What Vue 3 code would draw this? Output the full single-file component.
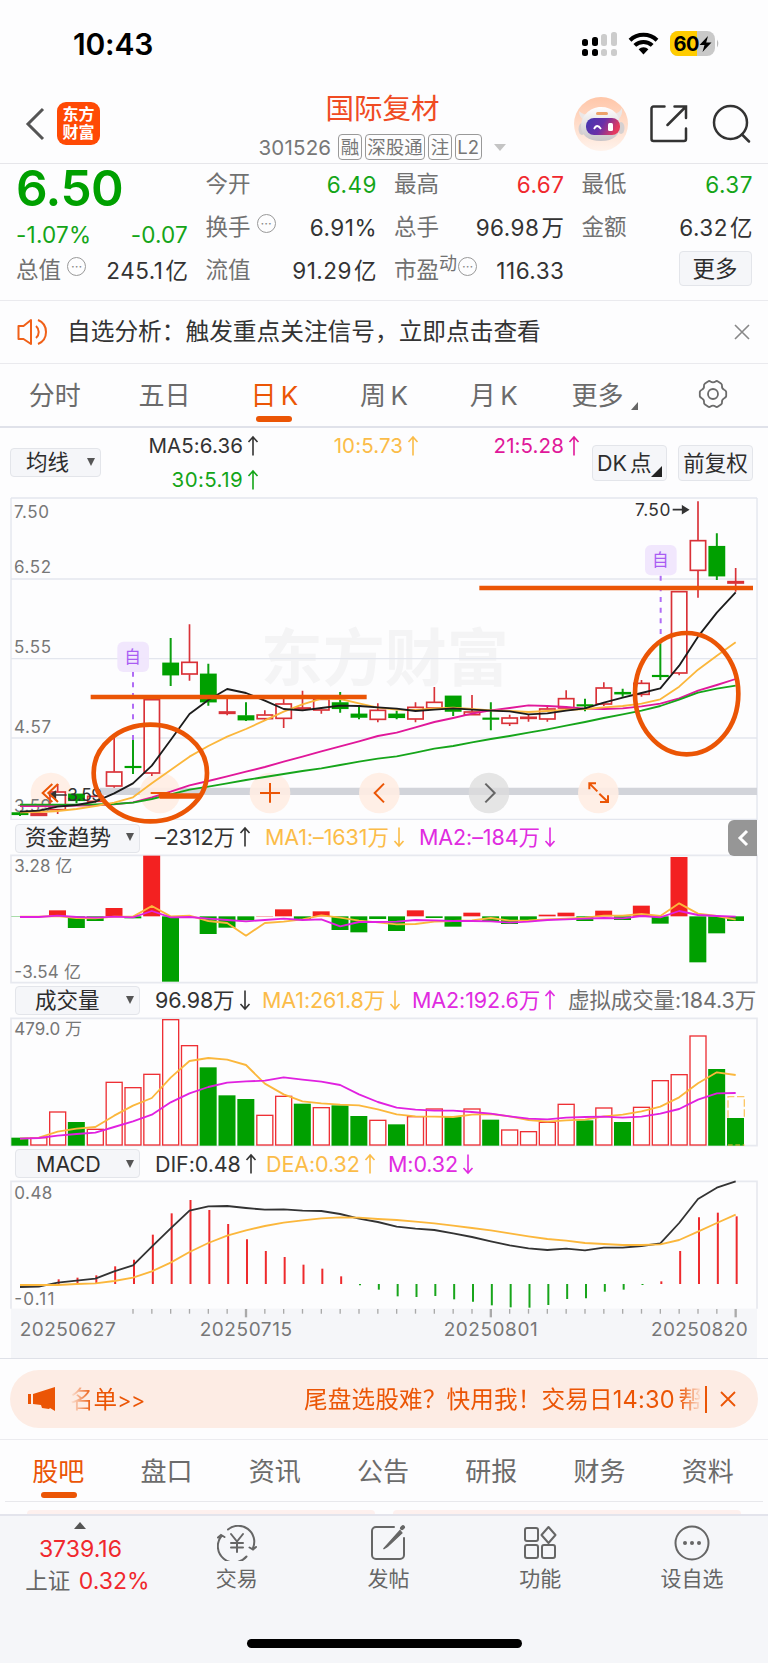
<script setup>
import { ref, computed } from 'vue'

// ---------- quote ----------
const tags = ['融', '深股通', '注', 'L2']

const periods = ['分时', '五日', '日 K', '周 K', '月 K', '更多']
const period = ref(2)

const infoTabs = ['股吧', '盘口', '资讯', '公告', '研报', '财务', '资料']
const infoTab = ref(0)

// ---------- charts (3 units = 1px) ----------
const cx = (i) => 60 + i * 56.5
const line = (values) => values.map((v, i) => `${cx(i)},${v}`).join(' ')

// [up, high, top, bottom, low]
const candles = [
  [0, 966, 968, 974, 978], [1, 970, 970, 977, 977], [1, 882, 905, 960, 972], [0, 912, 912, 932, 940],
  [1, 914, 918, 935, 938], [1, 740, 845, 889, 893], [0, 750, 829, 833, 852], [1, 628, 628, 850, 858],
  [0, 444, 519, 555, 588], [1, 403, 516, 553, 572], [0, 521, 552, 636, 647], [1, 625, 665, 671, 676],
  [0, 637, 677, 690, 693], [1, 661, 674, 687, 693], [1, 625, 641, 686, 714], [1, 602, 653, 658, 662],
  [1, 618, 627, 661, 671], [0, 606, 638, 656, 668], [0, 648, 672, 682, 688], [1, 640, 660, 689, 697],
  [0, 662, 672, 683, 688], [1, 637, 651, 688, 697], [1, 591, 636, 655, 655], [0, 618, 618, 664, 678],
  [1, 615, 665, 675, 675], [0, 637, 684, 688, 721], [1, 674, 683, 701, 708], [1, 672, 681, 686, 695],
  [1, 646, 656, 688, 695], [1, 601, 625, 655, 655], [0, 626, 644, 648, 664], [1, 577, 593, 643, 648],
  [0, 596, 607, 612, 620], [1, 570, 579, 614, 620], [0, 460, 556, 560, 570], [1, 304, 304, 550, 556],
  [1, 34, 151, 242, 323], [0, 130, 169, 258, 270], [1, 234, 274, 280, 305]
]

const ma5 = [965, 962, 950, 945, 935, 910, 880, 827, 750, 672, 630, 597, 609, 632, 657, 661, 654, 647, 648, 652, 656, 663, 659, 655, 659, 662, 664, 673, 670, 662, 655, 638, 623, 609, 595, 527, 440, 368, 307]
const ma10 = [967, 966, 963, 957, 948, 938, 922, 880, 840, 800, 768, 740, 717, 691, 665, 643, 626, 627, 640, 653, 659, 660, 655, 653, 657, 661, 663, 666, 663, 660, 657, 652, 648, 641, 628, 590, 539, 497, 457]
const ma21 = [948, 948, 948, 947, 946, 943, 937, 922, 905, 886, 873, 859, 845, 831, 815, 800, 784, 769, 754, 738, 728, 712, 696, 684, 671, 661, 654, 646, 648, 651, 656, 657, 655, 649, 641, 625, 602, 585, 567]
const ma30 = [944, 944, 944, 944, 943, 942, 938, 927, 913, 899, 890, 880, 870, 861, 852, 843, 835, 825, 815, 806, 799, 788, 776, 768, 757, 747, 738, 728, 718, 707, 696, 684, 673, 662, 648, 629, 608, 596, 587]

const priceLabels = [['7.50', 83], ['6.52', 248], ['5.55', 489], ['4.57', 729], ['3.59', 967]]

// main fund flow, positive = inflow
const funds = [-1, 0, 18, -35, -14, 25, -6, 182, -196, 0, -53, -34, -12, 1, 21, -10, 15, -41, -48, -8, -44, 18, -5, -31, 11, -16, -23, -12, 5, 11, -14, 17, -11, 32, -22, 178, -138, -51, -14]
const fundMa1 = [305, 305, 303, 309, 310, 305, 305, 273, 304, 302, 318, 324, 362, 324, 320, 313, 301, 308, 317, 322, 328, 327, 320, 318, 316, 309, 317, 316, 313, 311, 308, 302, 302, 297, 303, 265, 296, 303, 314]
const fundMa2 = [306, 306, 302, 306, 308, 305, 307, 288, 307, 306, 311, 315, 319, 315, 311, 315, 313, 334, 321, 321, 320, 315, 316, 318, 318, 319, 323, 320, 315, 313, 311, 309, 310, 303, 307, 288, 300, 303, 305]

// volume: bar tops, floor at 991
const volumes = [968, 966, 889, 921, 941, 800, 816, 776, 612, 690, 757, 841, 852, 899, 842, 866, 876, 871, 903, 914, 928, 903, 880, 906, 880, 914, 943, 948, 920, 866, 916, 877, 921, 875, 795, 777, 661, 762, 909]
const volumeDown = [0, 3, 10, 11, 12, 15, 17, 18, 20, 23, 25, 30, 32, 37, 38]
const volMa1 = [971, 968, 950, 941, 936, 902, 872, 849, 788, 738, 729, 734, 750, 806, 838, 859, 865, 869, 871, 883, 898, 904, 905, 906, 899, 897, 904, 915, 920, 916, 914, 904, 899, 889, 875, 847, 805, 772, 780]
const volMa2 = [971, 969, 962, 957, 953, 936, 919, 899, 862, 835, 816, 803, 799, 797, 787, 794, 800, 810, 838, 861, 878, 884, 887, 887, 891, 896, 904, 911, 913, 908, 906, 905, 908, 905, 896, 882, 854, 835, 834]

const macd = [406, 406, 388, 383, 376, 349, 329, 254, 190, 150, 180, 222, 268, 303, 321, 344, 356, 379, 406, 419, 439, 441, 438, 448, 455, 466, 472, 473, 465, 447, 445, 425, 419, 405, 394, 303, 202, 188, 199]
const dif = [411, 410, 398, 392, 386, 364, 346, 290, 235, 182, 169, 168, 174, 179, 178, 182, 183, 192, 206, 216, 230, 236, 240, 250, 261, 274, 286, 295, 300, 296, 301, 293, 293, 288, 280, 219, 147, 113, 94]
const dea = [405, 405, 405, 402, 400, 393, 383, 364, 338, 306, 279, 257, 241, 228, 218, 211, 205, 202, 203, 207, 210, 215, 220, 227, 234, 241, 250, 259, 267, 272, 279, 282, 285, 285, 283, 270, 245, 219, 194]

const ticks = computed(() => dif.map((_, i) => i).filter((i) => i >= 6))
const dates = [['20250627', 59, 288], ['20250715', 599, 277], ['20250801', 1331, 282], ['20250820', 1953, 290]]
</script>

<template>
  <div class="page">
    <!-- status bar -->
    <div class="status">
      <span class="time">10:43</span>
      <svg class="status-icons" width="140" height="28" viewBox="0 0 140 28">
        <g fill="#000">
          <rect x="2" y="9" width="6" height="7" rx="2.5" /><rect x="12" y="7" width="6" height="9" rx="2.5" />
          <rect x="2" y="19" width="6" height="7" rx="2.5" /><rect x="12" y="19" width="6" height="7" rx="2.5" />
        </g>
        <g fill="#ccc">
          <rect x="21" y="4" width="6" height="12" rx="2.5" /><rect x="31" y="2" width="6" height="14" rx="2.5" />
          <rect x="21" y="19" width="6" height="7" rx="2.5" /><rect x="31" y="19" width="6" height="7" rx="2.5" />
        </g>
        <g fill="none" stroke="#000" stroke-width="4">
          <path d="M50 10.2a19.5 19.5 0 0 1 27 0" />
          <path d="M54.8 15.4a12.6 12.6 0 0 1 17.4 0" />
        </g>
        <path d="M58.6 19.2a7.2 7.2 0 0 1 9.8 0L63.5 24.6z" fill="#000" />
        <rect x="90" y="1" width="45" height="25" rx="8" fill="#c9c9c9" />
        <path d="M98 1h19v25h-19a8 8 0 0 1-8-8v-9a8 8 0 0 1 8-8z" fill="#fc0" />
        <path d="M137 9.5q2.5 4 0 8z" fill="#bbb" />
        <text x="93.5" y="20.8" class="battery">60</text>
        <path d="M128 6l-8.5 9h5l-2 7 9-9.5h-5.3z" fill="#000" />
      </svg>
    </div>

    <!-- title bar -->
    <header class="head">
      <svg class="back" width="20" height="34" viewBox="0 0 20 34"><path d="M18 2L3 17l15 15" fill="none" stroke="#555" stroke-width="3" /></svg>
      <div class="logo"><span>东方</span><span>财富</span></div>
      <div class="title">
        <div class="name">国际复材</div>
        <div class="code">
          <span class="num">301526</span>
          <span v-for="t in tags" :key="t" class="tag">{{ t }}</span>
          <i class="caret"></i>
        </div>
      </div>
      <svg class="robot" width="56" height="56" viewBox="0 0 56 56">
        <defs>
          <linearGradient id="halo" x1="0" y1="0" x2="0" y2="1"><stop offset="0" stop-color="#ffc6a8" /><stop offset="1" stop-color="#fff3ec" /></linearGradient>
          <linearGradient id="visor" x1="0" y1="0" x2="1" y2=".3"><stop offset="0" stop-color="#4236b0" /><stop offset=".55" stop-color="#6a2fa8" /><stop offset="1" stop-color="#e53a5e" /></linearGradient>
          <linearGradient id="shell" x1="0" y1="0" x2="0" y2="1"><stop offset="0" stop-color="#fff" /><stop offset="1" stop-color="#c9c5c8" /></linearGradient>
        </defs>
        <circle cx="28" cy="28" r="27" fill="url(#halo)" />
        <path d="M6 15q0 6 5 9l5-5q-6 0-10-4zM49 12q1 6-3 11l-7-5q7 0 10-6z" fill="#ece7e6" />
        <ellipse cx="9" cy="33" rx="3.5" ry="6" fill="#d5d0d1" /><ellipse cx="48" cy="32" rx="3.5" ry="6" fill="#d5d0d1" />
        <path d="M28 11c12 0 19 8 19 18s-6 16-19 16S8 39 8 30s8-19 20-19z" fill="url(#shell)" />
        <rect x="23" y="16" width="12" height="3" rx="1.5" fill="#eda26a" />
        <rect x="13" y="22" width="34" height="17" rx="8" fill="url(#visor)" />
        <path d="M21 33q3-6 7 0" fill="none" stroke="#fff" stroke-width="1.8" /><rect x="35" y="27" width="5" height="8" rx="1.5" fill="#fff" />
      </svg>
      <svg class="share" width="38" height="38" viewBox="0 0 38 38" fill="none" stroke="#333" stroke-width="2.5" stroke-linecap="round">
        <path d="M14.500 1.500H3.500a2 2 0 0 0-2 2v30.500a2 2 0 0 0 2 2H34a2 2 0 0 0 2-2V23.500" />
        <path d="M24.500 1.500H36V13M36 1.500L17.500 20" />
      </svg>
      <svg class="search" width="40" height="40" viewBox="0 0 40 40" fill="none" stroke="#333" stroke-width="2.5" stroke-linecap="round">
        <circle cx="18.500" cy="18.500" r="16.500" /><path d="M30 30.500l7 7" />
      </svg>
    </header>

    <!-- quote -->
    <section class="quote">
      <div class="col first">
        <div class="price">6.50</div>
        <div class="row chg green"><span>-1.07%</span><span>-0.07</span></div>
        <div class="row"><label>总值<sup class="dots">···</sup></label><b>245.1<em>亿</em></b></div>
      </div>
      <div class="col">
        <div class="row"><label>今开</label><b class="green">6.49</b></div>
        <div class="row"><label>换手<sup class="dots">···</sup></label><b>6.91%</b></div>
        <div class="row"><label>流值</label><b>91.29<em>亿</em></b></div>
      </div>
      <div class="col">
        <div class="row"><label>最高</label><b class="red">6.67</b></div>
        <div class="row"><label>总手</label><b>96.98<em>万</em></b></div>
        <div class="row"><label>市盈<sup class="dyn">动</sup><sup class="dots near">···</sup></label><b>116.33</b></div>
      </div>
      <div class="col">
        <div class="row"><label>最低</label><b class="green">6.37</b></div>
        <div class="row"><label>金额</label><b>6.32<em>亿</em></b></div>
        <div class="row end"><button class="btn more">更多</button></div>
      </div>
    </section>

    <!-- notice -->
    <div class="notice">
      <svg width="32" height="28" viewBox="0 0 32 28" fill="none" stroke="#f06018" stroke-width="2" stroke-linejoin="round">
        <path d="M1.500 8h5L14 2v24l-7.500-5h-5zM19 8a8 8 0 0 1 0 12M21 2a13 13 0 0 1 0 24" />
      </svg>
      <span>自选分析：触发重点关注信号，立即点击查看</span>
      <svg class="close" width="16" height="16" viewBox="0 0 16 16"><path d="M1 1l14 14M15 1L1 15" stroke="#888" stroke-width="1.600" /></svg>
    </div>

    <!-- period tabs -->
    <nav class="periods">
      <a v-for="(p, i) in periods" :key="p" :class="{ on: period === i }" @click="period = i">{{ p }}<i v-if="i === 5" class="corner"></i></a>
      <a>
        <svg width="30" height="30" viewBox="0 0 30 30" fill="none" stroke="#6b6b6b" stroke-width="1.800" stroke-linejoin="round">
          <path d="M10 2.500q1.200-1 2.500 0 2.500 1.800 5 0 1.300-1 2.500 0l3 2q1.200.8 1 2.500-.3 2.500 2.200 3.800 1.800.8 2 2.200v4q-.2 1.400-2 2.200-2.500 1.300-2.200 3.800.2 1.700-1 2.500l-3 2q-1.200 1-2.500 0-2.500-1.800-5 0-1.300 1-2.500 0l-3-2q-1.200-.8-1-2.500.3-2.500-2.200-3.800-1.800-.8-2-2.200v-4q.2-1.400 2-2.200Q6.300 9.500 6 7q-.2-1.700 1-2.500z" />
          <circle cx="15" cy="15" r="5" />
        </svg>
      </a>
    </nav>

    <!-- moving averages -->
    <div class="averages">
      <button class="btn select">均线<i></i></button>
      <div class="ma-grid">
        <span>MA5:6.36<svg class="arr" viewBox="0 0 12 20"><path d="M6 19.500V1M1.500 6L6 1l4.500 5" /></svg></span>
        <span class="yellow">10:5.73<svg class="arr" viewBox="0 0 12 20"><path d="M6 19.500V1M1.500 6L6 1l4.500 5" /></svg></span>
        <span class="pink">21:5.28<svg class="arr" viewBox="0 0 12 20"><path d="M6 19.500V1M1.500 6L6 1l4.500 5" /></svg></span>
        <span class="green">30:5.19<svg class="arr" viewBox="0 0 12 20"><path d="M6 19.500V1M1.500 6L6 1l4.500 5" /></svg></span>
      </div>
      <button class="btn tall dk">DK 点<i></i></button>
      <button class="btn tall">前复权</button>
    </div>

    <!-- K line -->
    <svg class="chart kline" viewBox="0 0 2304 990" width="768" height="330">
      <text x="782" y="574" class="mark" textLength="744">东方财富</text>
      <g class="grid">
        <path d="M33 24H2271M33 267H2271M33 506H2271M33 744H2271" stroke-width="5" />
        <path d="M33 24V988H2271V24" />
      </g>
      <path d="M300 904H2271" stroke="#d2d4da" stroke-width="22" />
      <g fill="#ffede3" fill-opacity=".9">
        <circle cx="153" cy="909" r="61" /><circle cx="480" cy="909" r="61" /><circle cx="810" cy="909" r="61" />
        <circle cx="1138" cy="909" r="61" /><circle cx="1795" cy="909" r="61" />
      </g>
      <circle cx="1467" cy="909" r="61" fill="#dcdcdc" fill-opacity=".75" />
      <text v-for="l in priceLabels" :key="l[0]" x="42" :y="l[1]" class="axis" :textLength="l[0] === '7.50' ? 105 : 111">{{ l[0] }}</text>

      <path d="M399 545V690M399 735V752" class="dash" />
      <path d="M1982 257V432" class="dash" />
      <g v-for="(c, i) in candles" :key="i" :class="c[0] ? 'up' : 'down'">
        <path :d="`M${cx(i)} ${c[1]}V${c[2]}M${cx(i)} ${c[3]}V${c[4]}`" />
        <rect :x="cx(i) - 23" :y="c[2] + 1" width="46" :height="Math.max(c[3] - c[2] - 2, 1)" />
      </g>
      <polyline :points="line(ma21)" stroke="#e0189a" />
      <polyline :points="line(ma30)" stroke="#16a51b" />
      <polyline :points="line(ma10)" stroke="#fbb73c" />
      <polyline :points="line(ma5)" stroke="#1c1c1c" />

      <g class="self">
        <rect x="352" y="455" width="95" height="91" rx="18" /><text x="398" y="519" text-anchor="middle">自</text>
        <rect x="1935" y="165" width="95" height="91" rx="18" /><text x="1981" y="229" text-anchor="middle">自</text>
      </g>
      <text x="1905" y="78" class="peak" textLength="106">7.50</text>
      <path d="M2018 59H2062M2048 49L2064 59L2048 69z" class="tip" />
      <text x="202" y="933" class="peak" textLength="104">3.59</text>
      <path d="M200 915H152M166 905L150 915L166 925z" class="tip" />

      <g class="ctl">
        <path d="M157 882L128 909L157 936M174 882L145 909L174 936" />
        <path d="M452 909H510M780 909H840M810 879V938M1152 881L1124 909L1152 937" />
        <path d="M1768 898V880H1788M1768 880L1792 904M1822 936H1824V916M1800 936H1824M1824 936L1798 911" />
        <path d="M1456 881L1484 909L1456 937" stroke="#666" />
      </g>

      <!-- hand drawn marks -->
      <g fill="none" stroke="#eb5505" stroke-width="14">
        <path d="M272 621H1100M1438 294H2259" />
        <ellipse cx="451" cy="849" rx="170" ry="145" />
        <ellipse cx="2060" cy="611" rx="155" ry="182" />
        <path d="M484 918H598" stroke-linecap="round" stroke-width="17" />
      </g>
    </svg>

    <!-- fund flow -->
    <div class="panel-head funds-head">
      <button class="btn select">资金趋势<i></i></button>
      <span>–2312万<svg class="arr" viewBox="0 0 12 20"><path d="M6 19.500V1M1.500 6L6 1l4.500 5" /></svg></span>
      <span class="yellow">MA1:–1631万<svg class="arr" viewBox="0 0 12 20"><path d="M6 .5V19M1.500 14L6 19l4.500-5" /></svg></span>
      <span class="violet">MA2:–184万<svg class="arr" viewBox="0 0 12 20"><path d="M6 .5V19M1.500 14L6 19l4.500-5" /></svg></span>
      <div class="fold"><svg width="12" height="18" viewBox="0 0 12 18"><path d="M10 2L3 9l7 7" fill="none" stroke="#fff" stroke-width="3" /></svg></div>
    </div>
    <svg class="chart" viewBox="0 120 2304 384" width="768" height="128">
      <path d="M33 121H2271V503H33z" class="frame" />
      <text x="43" y="172" class="axis" textLength="174">3.28 亿</text>
      <text x="43" y="490" class="axis" textLength="200">-3.54 亿</text>
      <rect v-for="(f, i) in funds" :key="i" :x="cx(i) - 26" :y="f > 0 ? 304 - f : 304" width="51" :height="Math.abs(f)" :fill="f > 0 ? '#f32121' : '#00a000'" />
      <polyline :points="line(fundMa1)" stroke="#fbb73c" />
      <polyline :points="line(fundMa2)" stroke="#e021e0" />
    </svg>

    <!-- volume -->
    <div class="panel-head volume-head">
      <button class="btn select">成交量<i></i></button>
      <span>96.98万<svg class="arr" viewBox="0 0 12 20"><path d="M6 .5V19M1.500 14L6 19l4.500-5" /></svg></span>
      <span class="yellow">MA1:261.8万<svg class="arr" viewBox="0 0 12 20"><path d="M6 .5V19M1.500 14L6 19l4.500-5" /></svg></span>
      <span class="violet">MA2:192.6万<svg class="arr" viewBox="0 0 12 20"><path d="M6 19.500V1M1.500 6L6 1l4.500 5" /></svg></span>
      <span class="grey">虚拟成交量:184.3万</span>
    </div>
    <svg class="chart" viewBox="0 609 2304 384" width="768" height="128">
      <path d="M33 610H2271V992H33z" class="frame" />
      <text x="43" y="661" class="axis" textLength="203">479.0 万</text>
      <template v-for="(v, i) in volumes" :key="i">
        <rect v-if="volumeDown.includes(i)" :x="cx(i) - 26" :y="v" width="51" :height="992 - v" fill="#00a000" />
        <rect v-else :x="cx(i) - 24" :y="v + 2" width="48" :height="988 - v" fill="#fff" stroke="#ee3035" stroke-width="4" />
      </template>
      <!-- projected volume of the running day -->
      <path d="M2184 908V845H2233V908" fill="none" stroke="#fcc766" stroke-width="4" stroke-dasharray="22 8" />
      <path d="M2184 990H2234" stroke="#fbb73c" stroke-width="3" stroke-dasharray="14 8" />
      <polyline :points="line(volMa1)" stroke="#fbb73c" />
      <polyline :points="line(volMa2)" stroke="#e021e0" />
    </svg>

    <!-- MACD -->
    <div class="panel-head macd-head">
      <button class="btn select">MACD<i></i></button>
      <span>DIF:0.48<svg class="arr" viewBox="0 0 12 20"><path d="M6 19.500V1M1.500 6L6 1l4.500 5" /></svg></span>
      <span class="yellow">DEA:0.32<svg class="arr" viewBox="0 0 12 20"><path d="M6 19.500V1M1.500 6L6 1l4.500 5" /></svg></span>
      <span class="violet">M:0.32<svg class="arr" viewBox="0 0 12 20"><path d="M6 .5V19M1.500 14L6 19l4.500-5" /></svg></span>
    </div>
    <svg class="chart" viewBox="0 93 2304 531" width="768" height="177">
      <rect x="33" y="476" width="2238" height="148" fill="#f5f6f9" />
      <path d="M33 476V94H2271V476" class="frame" />
      <text x="43" y="146" class="axis" textLength="114">0.48</text>
      <text x="43" y="464" class="axis" textLength="120">-0.11</text>
      <path v-for="(m, i) in macd" :key="i" :d="`M${cx(i) + 3} 402V${m}`" :stroke="m > 402 ? '#18a51b' : '#ee2a2d'" stroke-width="6" />
      <polyline :points="line(dif)" stroke="#333" stroke-width="6" />
      <polyline :points="line(dea)" stroke="#fbb73c" stroke-width="6" />
      <path v-for="i in ticks" :key="'t' + i" :d="`M${cx(i)} 477V${[12, 25, 38].includes(i) ? 502 : 491}`" stroke="#aaa" :stroke-width="[12, 25, 38].includes(i) ? 7 : 4" />
      <text v-for="d in dates" :key="d[0]" :x="d[1]" y="559" class="date" :textLength="d[2]">{{ d[0] }}</text>
    </svg>

    <!-- promotion -->
    <div class="promo-wrap">
      <div class="promo">
        <svg class="horn" width="28" height="24" viewBox="0 0 28 24" fill="#eb5505"><path d="M0 7h3v10H0zM5 7L27 0v24l-5-3-1 1-7-1-1-3-8-1z" /></svg>
        <span class="tail">名单<small>&gt;&gt;</small></span>
        <span class="msg">尾盘选股难？快用我！交易日14:30 帮</span>
        <i class="sep"></i>
        <svg width="16" height="16" viewBox="0 0 16 16"><path d="M1 1l14 14M15 1L1 15" stroke="#eb5505" stroke-width="1.800" /></svg>
      </div>
    </div>

    <nav class="info">
      <a v-for="(t, i) in infoTabs" :key="t" :class="{ on: infoTab === i }" @click="infoTab = i">{{ t }}</a>
    </nav>
    <div class="peek"><i></i><i></i></div>

    <!-- bottom bar -->
    <footer class="foot">
      <div class="index">
        <i class="up-caret"></i>
        <div class="red">3739.16</div>
        <div><span class="label">上证</span> <span class="red">0.32%</span></div>
      </div>
      <div class="act">
        <svg width="40" height="36" viewBox="0 0 40 36" fill="none" stroke="#666" stroke-width="2" stroke-linecap="round">
          <path d="M11 4.500A16 16 0 0 1 36 23M39 22l-3 2.500-3.500-2M29.500 31.500A16 16 0 0 1 4.500 11M1 12.500L4 10l3.500 2" />
          <path d="M14 9l6 7.500L26 9M20 16.500V27M14 18h12M14 22.500h12" />
        </svg>
        <span>交易</span>
      </div>
      <div class="act">
        <svg width="36" height="36" viewBox="0 0 36 36" fill="none" stroke="#666" stroke-width="2" stroke-linecap="round">
          <path d="M24 2H6a4 4 0 0 0-4 4v24a4 4 0 0 0 4 4h24a4 4 0 0 0 4-4V13" />
          <path d="M30 5.500L13.500 24l4-2.500L32 8z" fill="#666" stroke-width="1.200" /><path d="M32 3.200l1-1" stroke-width="4" />
        </svg>
        <span>发帖</span>
      </div>
      <div class="act">
        <svg width="34" height="36" viewBox="0 0 34 36" fill="none" stroke="#666" stroke-width="2">
          <rect x="2" y="3" width="13" height="13" rx="2" /><rect x="2" y="20" width="13" height="13" rx="2" /><rect x="19" y="20" width="13" height="13" rx="2" />
          <path d="M25.500 2l7 8-7 8-7-8z" stroke-linejoin="round" />
        </svg>
        <span>功能</span>
      </div>
      <div class="act">
        <svg width="36" height="36" viewBox="0 0 36 36" fill="none" stroke="#666" stroke-width="2">
          <circle cx="18" cy="18" r="16.500" />
          <g fill="#666" stroke="none"><circle cx="11" cy="18" r="2" /><circle cx="18" cy="18" r="2" /><circle cx="25" cy="18" r="2" /></g>
        </svg>
        <span>设自选</span>
      </div>
    </footer>
    <div class="home"><i></i></div>
  </div>
</template>

<style>
body {
  background: #fdfdfe;
}
</style>

<style scoped>
.page {
  width: 768px;
  height: 1663px;
  overflow: hidden;
  display: flex;
  flex-direction: column;
  background: #fdfdfe;
  color: #333;
  font-family: Inter, "Noto Sans CJK SC", sans-serif;
  font-size: 22.5px;
}
.page > * {
  flex-shrink: 0;
  box-sizing: border-box;
}
svg {
  display: block;
}
.green { color: #14a518 !important; }
.red { color: #f0282d !important; }
.yellow { color: #fbbc48; }
.pink { color: #e0189a; }
.violet { color: #e02be0; }
.grey { color: #707070; }

.status {
  height: 88px;
  display: flex;
  justify-content: space-between;
  padding: 30px 48px 0 73px;
}
.time {
  font-size: 30px;
  line-height: 28px;
  font-weight: 600;
  color: #000;
  letter-spacing: -0.2px;
}
.battery {
  font-size: 20px;
  font-weight: 700;
  fill: #000;
  letter-spacing: -0.5px;
}

.head {
  height: 76px;
  display: flex;
  align-items: flex-start;
  border-bottom: 1.5px solid #e6e6ea;
  padding-left: 25px;
}
.back { margin-top: 19px; }
.logo {
  width: 43px;
  height: 43px;
  margin: 14px 0 0 12px;
  border-radius: 9px;
  background: #ff4a05;
  color: #fff;
  font-size: 16px;
  font-weight: 700;
  line-height: 17.500px;
  display: flex;
  flex-direction: column;
  justify-content: center;
  align-items: center;
}
.title {
  width: 473px;
  display: flex;
  flex-direction: column;
  align-items: center;
}
.name {
  color: #f04b23;
  font-size: 28.5px;
  line-height: 42px;
  margin-left: 92px;
}
.code {
  display: flex;
  align-items: center;
  height: 28px;
  margin: 3px 0 0 91px;
  color: #777;
  font-size: 20.5px;
}
.num { margin-right: 7px; letter-spacing: 0.2px; }
.tag {
  border: 1.5px solid #999;
  border-radius: 4px;
  font-size: 18.5px;
  line-height: 24px;
  padding: 0 1.5px;
  margin-right: 3px;
  color: #777;
}
.caret {
  margin-left: 9px;
  border: 6px solid transparent;
  border-top: 7px solid #c4c4c4;
  border-bottom: 0;
}
.robot { margin: 8px 0 0 0; }
.share { margin: 17px 0 0 21px; }
.search { margin: 16px 0 0 24px; }

.quote {
  height: 137px;
  display: grid;
  grid-template-columns: 172px 171px 170px 171px;
  column-gap: 17.5px;
  padding: 0 0 0 16px;
  border-bottom: 1.5px solid #eaeaee;
}
.row {
  display: flex;
  justify-content: space-between;
  height: 43px;
  line-height: 40px;
}
.row label { color: #717171; display: flex; }
.row b { font-weight: 400; letter-spacing: 0.5px; line-height: 41px; margin-right: -0.5px; }
.row em { font-style: normal; margin-left: 2px; }
.price {
  height: 46px;
  line-height: 49px;
  font-size: 49.5px;
  font-weight: 600;
  color: #00a000;
  letter-spacing: -0.5px;
}
.row.chg { height: 40px; line-height: 49px; font-size: 22.5px; letter-spacing: 0.2px; }
.dots {
  width: 17px;
  height: 17px;
  margin: 7px 0 0 6px;
  border: 1.5px solid #999;
  border-radius: 50%;
  font-size: 13px;
  line-height: 16px;
  text-align: center;
  color: #888;
  letter-spacing: 0;
}
.dots.near { margin-left: 1px; }
.dyn { font-size: 18px; line-height: 28px; }
.end { justify-content: flex-end; }
.btn {
  border: 1.5px solid #e3e5ea;
  border-radius: 4px;
  background: #f5f6f9;
  color: #2d2d2d;
  font: inherit;
  padding: 0;
  white-space: nowrap;
}
.more { width: 73px; height: 35px; line-height: 30px; margin: 1px 1px 0 0; }

.notice {
  height: 63px;
  display: flex;
  align-items: center;
  padding: 0 18px 0 17px;
  border-bottom: 1.5px solid #eaeaee;
  font-size: 23.7px;
}
.notice span { margin-left: 18px; padding-bottom: 4px; }
.close { margin-left: auto; }

.periods {
  height: 64px;
  display: flex;
  border-bottom: 2px solid #e0e2ea;
  color: #6b6b6b;
  font-size: 26px;
  word-spacing: -3px;
}
.periods a {
  flex: 1;
  display: flex;
  justify-content: center;
  align-items: center;
  position: relative;
  padding-bottom: 3px;
}
.periods .on, .info .on { color: #eb5505; }
.periods .on::after, .info .on::after {
  content: "";
  position: absolute;
  left: 50%;
  bottom: 4px;
  width: 36px;
  height: 6px;
  margin-left: -18px;
  border-radius: 3px;
  background: #eb5505;
}
.corner {
  margin: 24px -3px 0 8px;
  border-left: 7px solid transparent;
  border-bottom: 8px solid #666;
}

.averages {
  height: 62px;
  display: flex;
  font-size: 20.5px;
  padding-left: 10px;
}
.select {
  display: flex;
  align-items: center;
  justify-content: space-between;
  line-height: 24px;
}
.select i {
  border: 4.5px solid transparent;
  border-top: 8px solid #555;
  border-bottom: 0;
}
.averages .select {
  width: 91px;
  height: 29px;
  margin-top: 20px;
  padding: 0 5px 2px 15px;
  font-size: 21.5px;
}
.ma-grid {
  display: grid;
  grid-template-columns: 158px 160px 161px;
  grid-auto-rows: 34px;
  width: 491px;
  line-height: 34px;
  padding-top: 1px;
  box-sizing: border-box;
}
.ma-grid span {
  display: flex;
  justify-content: flex-end;
  align-items: center;
  letter-spacing: 0.1px;
}
.ma-grid .green { letter-spacing: 0.4px; }
.arr {
  width: 12px;
  height: 20px;
  margin-left: 4px;
  fill: none;
  stroke: currentColor;
  stroke-width: 1.6;
  overflow: visible;
}
.tall {
  width: 75px;
  height: 36px;
  margin: 17px 11px 0 0;
  font-size: 21.5px;
  padding-bottom: 3px;
}
.dk { position: relative; text-align: left; padding-left: 4px; word-spacing: -3px; }
.dk i {
  position: absolute;
  right: 4px;
  bottom: 3px;
  border-left: 11px solid transparent;
  border-bottom: 11px solid #222;
}

.chart { overflow: visible; }
.kline { position: relative; z-index: 1; }
.chart polyline {
  fill: none;
  stroke-width: 5.5;
  stroke-linejoin: round;
}
.grid path { fill: none; stroke: #e3e6ee; stroke-width: 4; }
.frame { fill: none; stroke: #e7e9ef; stroke-width: 5; }
.axis { font-size: 51px; fill: #777; }
.date { font-size: 57px; fill: #777; }
.mark {
  font-size: 186px;
  font-weight: 700;
  fill: #f4f4f5;
}
.up path { stroke: #d93238; stroke-width: 5; }
.up rect { fill: #fff; stroke: #d93238; stroke-width: 5; }
.down path { stroke: #0ca010; stroke-width: 6; }
.down rect { fill: #00a000; stroke: #00a000; stroke-width: 4.5; }
.dash { stroke: #b06cf5; stroke-width: 6; stroke-dasharray: 15 17; }
.self rect { fill: #efe4fd; fill-opacity: 0.9; }
.self text { font-size: 50px; fill: #a95cf3; }
.peak { font-size: 52px; fill: #333; }
.tip { fill: #333; stroke: #333; stroke-width: 5; }
.ctl path { fill: none; stroke: #eb5505; stroke-width: 6; }
.ctl path:last-child { stroke: #666; }

.panel-head {
  height: 35px;
  display: grid;
  align-items: center;
  padding-left: 15px;
  font-size: 21.5px;
  color: #333;
  position: relative;
}
.panel-head .grey { color: #707070; }
.panel-head .yellow { color: #fbbc48; }
.panel-head .violet { color: #e02be0; }
.panel-head span {
  display: flex;
  align-items: center;
  white-space: nowrap;
  letter-spacing: -0.1px;
  line-height: 24px;
  padding-bottom: 2px;
  margin-left: -1px;
}
.panel-head .select {
  width: 125px;
  height: 29px;
  padding: 0 5px 2px 9px;
  font-size: 21.5px;
}
.volume-head .select { padding-left: 19px; }
.macd-head .select { padding-left: 20px; padding-bottom: 0; }
.funds-head { grid-template-columns: 141px 110px 154px 200px 1fr; }
.volume-head { grid-template-columns: 141px 107px 150px 156px 1fr; }
.macd-head { grid-template-columns: 141px 111px 122px 200px; }
.macd-head span { padding-bottom: 0; }
.fold {
  width: 29px;
  height: 36px;
  margin-left: 108px;
  border-radius: 6px 0 0 6px;
  background: #969696;
  display: flex;
  justify-content: center;
  align-items: center;
}

.promo-wrap {
  height: 82px;
  padding: 11px 10px 0;
  border-top: 1.5px solid #dfe1e8;
  border-bottom: 1.5px solid #ebebef;
}
.promo {
  height: 58px;
  border-radius: 29px;
  background: #fdece4;
  color: #eb5505;
  display: flex;
  align-items: center;
  padding-left: 18px;
  font-size: 23.6px;
}
.tail {
  width: 234px;
  margin-left: 14px;
  padding-bottom: 2px;
  -webkit-mask-image: linear-gradient(90deg, transparent, #000 22px);
  mask-image: linear-gradient(90deg, transparent, #000 22px);
}
.tail small { font-size: 21.5px; letter-spacing: -0.5px; }
.msg {
  width: 398px;
  overflow: hidden;
  white-space: nowrap;
  padding-bottom: 2px;
  word-spacing: -3px;
  letter-spacing: 0.16px;
  -webkit-mask-image: linear-gradient(270deg, transparent, #000 22px);
  mask-image: linear-gradient(270deg, transparent, #000 22px);
}
.sep {
  width: 1.5px;
  height: 27px;
  margin: 0 13px 0 3px;
  background: #eb5505;
}

.info {
  height: 62px;
  margin: 0 5px;
  display: flex;
  border-bottom: 1.5px solid #e8e8ec;
  color: #6b6b6b;
  font-size: 26px;
}
.info a {
  flex: 1;
  display: flex;
  justify-content: center;
  align-items: center;
  position: relative;
  padding: 0 2px 2px 0;
}
.info .on::after { bottom: 3px; }
.peek {
  height: 14px;
  padding: 8px 27px 0;
  display: flex;
  gap: 18px;
  border-bottom: 2px solid #e3e4ec;
}
.peek i {
  flex: 1;
  background: #fdf0ee;
  border-radius: 6px 6px 0 0;
}

.foot {
  height: 90px;
  display: flex;
  background: #f5f6f9;
}
.index {
  width: 161px;
  display: flex;
  flex-direction: column;
  align-items: center;
  line-height: 32px;
  padding-top: 6px;
  box-sizing: border-box;
  font-size: 23px;
}
.index div { letter-spacing: 0; white-space: nowrap; margin-left: 14px; }
.index div.red { margin-left: 0; }
.label { color: #666; font-size: 22.5px; margin-right: 2px; }
.up-caret {
  border: 6.5px solid transparent;
  border-bottom: 7px solid #555;
  border-top: 0;
}
.index .up-caret { margin: 0 0 4px; }
.act {
  width: 152px;
  display: flex;
  flex-direction: column;
  align-items: center;
  padding-top: 9px;
  color: #666;
  font-size: 21px;
  line-height: 36px;
}
.home {
  flex: 1;
  background: #f5f6f9;
  padding: 33px 0 0 247px;
}
.home i {
  display: block;
  width: 275px;
  height: 9px;
  border-radius: 5px;
  background: #000;
}
</style>
